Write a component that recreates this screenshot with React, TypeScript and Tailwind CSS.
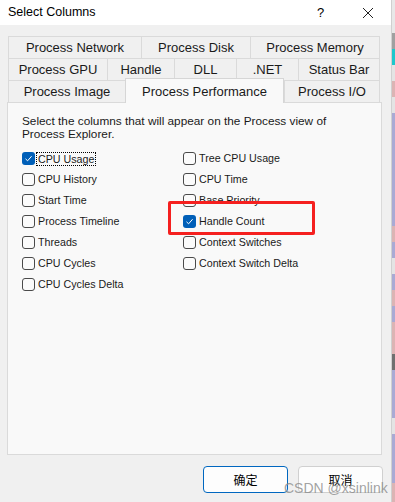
const tabRows: { label: string; w: string; selected?: boolean }[][] = [
  [
    { label: 'Process Network', w: 'w-[133px]' },
    { label: 'Process Disk', w: 'w-[109px]' },
    { label: 'Process Memory', w: 'w-[130px]' },
  ],
  [
    { label: 'Process GPU', w: 'w-[99px]' },
    { label: 'Handle', w: 'w-[67px]' },
    { label: 'DLL', w: 'w-[62px]' },
    { label: '.NET', w: 'w-[62px]' },
    { label: 'Status Bar', w: 'w-[82px]' },
  ],
  [
    { label: 'Process Image', w: 'w-[117px]' },
    { label: 'Process Performance', w: 'w-[159px]', selected: true },
    { label: 'Process I/O', w: 'w-[96px]' },
  ],
];

const leftCol = [
  { label: 'CPU Usage', checked: true, focus: true },
  { label: 'CPU History' },
  { label: 'Start Time' },
  { label: 'Process Timeline' },
  { label: 'Threads' },
  { label: 'CPU Cycles' },
  { label: 'CPU Cycles Delta' },
];

const rightCol = [
  { label: 'Tree CPU Usage' },
  { label: 'CPU Time' },
  { label: 'Base Priority' },
  { label: 'Handle Count', checked: true },
  { label: 'Context Switches' },
  { label: 'Context Switch Delta' },
];

// colours of the window that peeks out behind the dialog
const strip = [
  ['h-[33px]', 'bg-[#e8e8e8]'],
  ['h-[16px]', 'bg-[#a0a0a0]'],
  ['h-[16px]', 'bg-[#1cc8cc]'],
  ['h-[16px]', 'bg-[#e4e4e4]'],
  ['h-[16px]', 'bg-[#dcb4b4]'],
  ['h-[16px]', 'bg-[#e4e4e4]'],
  ['h-[113px]', 'bg-[#aaaad4]'],
  ['h-[16px]', 'bg-[#dcb4b4]'],
  ['h-[16px]', 'bg-[#aaaad4]'],
  ['h-[16px]', 'bg-[#e4e4e4]'],
  ['h-[16px]', 'bg-[#aaaad4]'],
  ['h-[16px]', 'bg-[#dcb4b4]'],
  ['h-[16px]', 'bg-[#aaaad4]'],
  ['h-[32px]', 'bg-[#dcb4b4]'],
  ['h-[16px]', 'bg-[#707070]'],
  ['h-[48px]', 'bg-[#aaaad4]'],
  ['h-[16px]', 'bg-[#e4e4e4]'],
  ['h-[49px]', 'bg-[#aaaad4]'],
  ['h-[19px]', 'bg-[#dcb4b4]'],
];

function Box({ checked }: { checked?: boolean }) {
  if (checked) {
    return (
      <span className="flex h-[13px] w-[13px] shrink-0 items-center justify-center rounded-[3px] bg-[#005fb8]">
        <svg width="9" height="9" viewBox="0 0 9 9" fill="none">
          <path d="M1.5 4.8 L3.6 6.8 L7.6 2.2" stroke="#fff" strokeWidth="1" />
        </svg>
      </span>
    );
  }
  return <span className="h-[13px] w-[13px] shrink-0 rounded-[3px] border border-[#4a4a4a] bg-[#fbfbfb]" />;
}

function Check({ label, checked, focus }: { label: string; checked?: boolean; focus?: boolean }) {
  return (
    <div className="flex h-[21px] items-center gap-[1px]">
      <Box checked={checked} />
      <span className={focus ? 'border border-dotted border-black px-px leading-[12px]' : 'px-[2px]'}>{label}</span>
    </div>
  );
}

export default function App() {
  return (
    <div className="flex h-[502px] w-[395px] overflow-hidden bg-[#f0f0f0] font-['Segoe_UI','Liberation_Sans',sans-serif] text-[#000]">
      <div className="relative flex w-[392px] flex-col border-r border-[#d0d0d0]">
        <div className="flex h-[25px] items-center bg-white pl-[8px] text-[12.5px]">
          <span className="flex-1">Select Columns</span>
          <span className="w-[12px] text-[13px]">?</span>
          <svg className="ml-[33px] mr-[17px]" width="12" height="12" viewBox="0 0 12 12">
            <path d="M1 1 L11 11 M11 1 L1 11" stroke="#222" strokeWidth="1" />
          </svg>
        </div>

        <div className="flex flex-1 flex-col px-[7px] pt-[11px]">
          <div className="ml-px flex flex-col text-[13px] text-[#1a1a1a]">
            {tabRows.map((row, i) => (
              <div key={i} className="flex h-[22px]">
                {row.map((t, j) => (
                  <div
                    key={t.label}
                    className={
                      t.selected
                        ? `${t.w} relative z-10 -mt-[2px] flex h-[25px] items-start justify-center border-x border-t border-[#d6d6d6] bg-[#f9f9f9] pt-[3px]`
                        : `${t.w} flex h-[22px] items-center justify-center border-t border-l border-[#dadada] ${j === row.length - 1 ? 'border-r' : ''}`
                    }
                  >
                    {t.label}
                  </div>
                ))}
              </div>
            ))}
          </div>

          <div className="relative h-[353px] w-[375px] border border-[#dadada] bg-[#f9f9f9] pl-[14px] pt-[12px] text-[10.7px] text-[#1a1a1a]">
            <p className="text-[11.8px] leading-[13px]">
              Select the columns that will appear on the Process view of
              <br />
              Process Explorer.
            </p>
            <div className="mt-[7px] grid grid-cols-[161px_1fr]">
              <div className="flex flex-col">
                {leftCol.map((c) => (
                  <Check key={c.label} {...c} />
                ))}
              </div>
              <div className="flex flex-col">
                {rightCol.map((c) => (
                  <Check key={c.label} {...c} />
                ))}
              </div>
            </div>
            <div className="absolute left-[160px] top-[98px] h-[34px] w-[147px] rounded-[2px] border-[3px] border-[#f5201f]" />
          </div>

          <div className="mt-[11px] flex justify-end gap-[10px] pr-[1px] font-['Noto_Sans_CJK_SC',sans-serif] text-[12px]">
            <button className="h-[27px] w-[85px] rounded-[4px] border border-[#0067c0] bg-[#fdfdfd]">确定</button>
            <button className="h-[27px] w-[85px] rounded-[4px] border border-[#d0d0d0] bg-[#fdfdfd]">取消</button>
          </div>
        </div>

        <span className="absolute left-[284px] top-[478px] font-['Liberation_Sans',sans-serif] text-[14px] text-[#8a8a8a]/80">
          CSDN @xsinlink
        </span>
      </div>
      <div className="flex w-[3px] flex-col">
        {strip.map(([h, c], i) => (
          <div key={i} className={`${h} ${c}`} />
        ))}
      </div>
    </div>
  );
}
